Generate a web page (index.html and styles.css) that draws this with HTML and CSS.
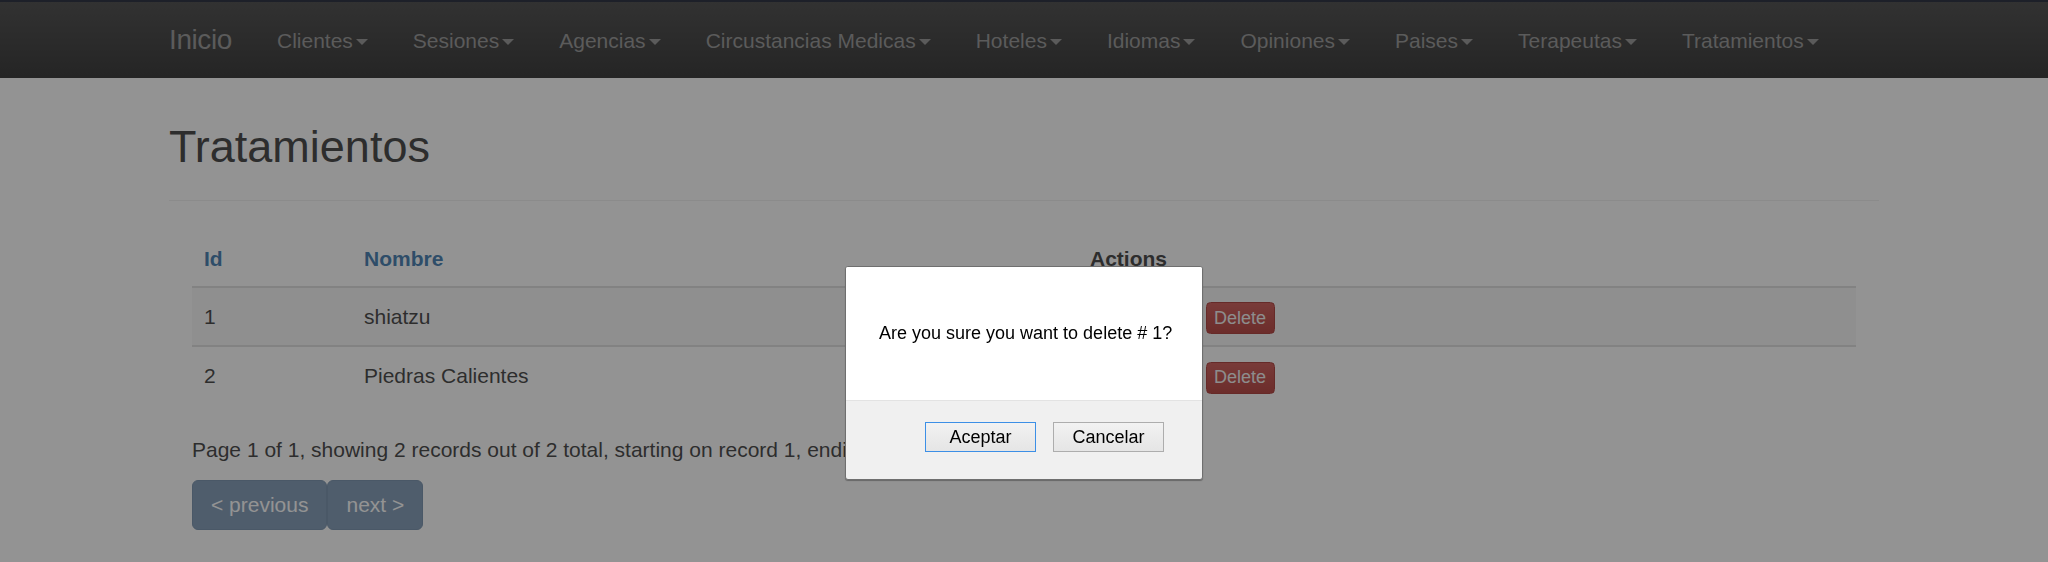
FILE: index.html
```html
<!DOCTYPE html>
<html lang="es">
<head>
<meta charset="utf-8">
<title>Tratamientos</title>
<link rel="stylesheet" href="styles.css">
</head>
<body>
<div class="navbar">
  <div class="nav-wrap">
    <a class="brand" href="#">Inicio</a>
    <ul class="nav">
      <li><a href="#">Clientes<span class="caret"></span></a></li>
      <li><a href="#">Sesiones<span class="caret"></span></a></li>
      <li><a href="#">Agencias<span class="caret"></span></a></li>
      <li><a href="#">Circustancias Medicas<span class="caret"></span></a></li>
      <li><a href="#">Hoteles<span class="caret"></span></a></li>
      <li><a href="#">Idiomas<span class="caret"></span></a></li>
      <li><a href="#">Opiniones<span class="caret"></span></a></li>
      <li><a href="#">Paises<span class="caret"></span></a></li>
      <li><a href="#">Terapeutas<span class="caret"></span></a></li>
      <li><a href="#">Tratamientos<span class="caret"></span></a></li>
    </ul>
  </div>
</div>

<div class="container">
  <div class="page-header">
    <h2>Tratamientos</h2>
  </div>
  <div class="content">
    <table class="table">
      <thead>
        <tr>
          <th class="col-id"><a href="#">Id</a></th>
          <th class="col-name"><a href="#">Nombre</a></th>
          <th class="col-actions">Actions</th>
        </tr>
      </thead>
      <tbody>
        <tr class="striped">
          <td>1</td>
          <td>shiatzu</td>
          <td class="actions"><a class="btn-xs btn-danger" href="#">Delete</a></td>
        </tr>
        <tr>
          <td>2</td>
          <td>Piedras Calientes</td>
          <td class="actions"><a class="btn-xs btn-danger" href="#">Delete</a></td>
        </tr>
      </tbody>
    </table>
    <p class="counter">Page 1 of 1, showing 2 records out of 2 total, starting on record 1, endi</p>
    <div class="pager">
      <span class="btn disabled">&lt; previous</span>
      <span class="btn disabled">next &gt;</span>
    </div>
  </div>
</div>

<div class="backdrop"></div>

<div class="dialog" role="dialog">
  <div class="dialog-body">Are you sure you want to delete # 1?</div>
  <div class="dialog-foot">
    <button class="dlg-btn focus" type="button">Aceptar</button>
    <button class="dlg-btn" type="button">Cancelar</button>
  </div>
</div>
</body>
</html>
```
FILE: styles.css
```css
* {
  box-sizing: border-box;
}

html,
body {
  margin: 0;
  padding: 0;
}

body {
  font-family: "Liberation Sans", Arial, sans-serif;
  font-size: 21px;
  line-height: 30px;
  color: #333;
  background: #fff;
  min-height: 562px;
}

/* Navbar */
.navbar {
  height: 78px;
  border-top: 2px solid #12182a;
  background: linear-gradient(#3c3c3c, #222);
}

.nav-wrap {
  width: 1710px;
  margin: 0 auto;
  display: flex;
}

.brand {
  display: block;
  font-size: 28px;
  letter-spacing: -0.4px;
  line-height: 30px;
  padding: 23px 22.5px 22px 0;
  color: #8e8e8e;
  text-decoration: none;
}

.nav {
  display: flex;
  list-style: none;
  margin: 0;
  padding: 0;
}

.nav a {
  display: block;
  padding: 24px 22.5px 22px;
  line-height: 30px;
  color: #8e8e8e;
  text-decoration: none;
  white-space: nowrap;
}

.caret {
  display: inline-block;
  width: 0;
  height: 0;
  margin-left: 3px;
  vertical-align: middle;
  border-top: 6px solid;
  border-left: 6px solid transparent;
  border-right: 6px solid transparent;
}

/* Page */
.container {
  width: 1710px;
  margin: 0 auto;
}

.page-header {
  margin: 44px 0 31px;
  padding-bottom: 13px;
  border-bottom: 1px solid #eee;
}

.page-header h2 {
  margin: 0 0 15px;
  font-size: 45px;
  line-height: 49.5px;
  font-weight: 500;
  color: #333;
}

.content {
  padding: 0 23px;
}

.table {
  width: 100%;
  border-collapse: separate;
  border-spacing: 0;
  margin-bottom: 30px;
  table-layout: fixed;
}

.table th {
  text-align: left;
  vertical-align: bottom;
  padding: 12px;
  line-height: 30px;
  border-bottom: 2px solid #ddd;
  font-weight: bold;
  color: #333;
}

.table th a {
  color: #3573aa;
  text-decoration: none;
}

.col-id {
  width: 160px;
}

.col-name {
  width: 726px;
}

.table td {
  padding: 11px 12px;
  line-height: 35px;
  border-top: 2px solid #ddd;
  vertical-align: top;
}

.table td.actions {
  padding-left: 127.5px;
}

.table tbody tr:first-child td {
  border-top: 0;
}

.table tr.striped td {
  background: #f7f7f7;
}

.btn-xs {
  display: inline-block;
  font-size: 18px;
  line-height: 27px;
  padding: 1.5px 7.5px;
  border: 1px solid transparent;
  border-radius: 4.5px;
  text-decoration: none;
  color: #f2f2f2;
}

.btn-danger {
  background: linear-gradient(#c94d49, #b0322e);
  border-color: #a52c28;
}

.counter {
  margin: 0 0 15px;
  white-space: nowrap;
}

.pager {
  display: flex;
}

.btn {
  display: block;
  padding: 9px 18px;
  line-height: 30px;
  font-size: 21px;
  color: #fff;
  background: #337ab7;
  border: 1px solid #2e6da4;
  border-radius: 6px;
  white-space: nowrap;
}

.btn.disabled {
  background: #7692b0;
  border-color: #6c88a6;
}

/* Tab-modal dim + confirm dialog */
.backdrop {
  position: fixed;
  left: 0;
  top: 0;
  right: 0;
  bottom: 0;
  background: rgba(40, 40, 40, 0.5);
}

.dialog {
  position: fixed;
  left: 845px;
  top: 266px;
  width: 358px;
  height: 214px;
  display: flex;
  flex-direction: column;
  background: #f0f0f0;
  border: 1px solid #6f6f6f;
  border-radius: 3px;
  box-shadow: 0 1px 1px rgba(0, 0, 0, 0.3);
  overflow: hidden;
  font-family: "Liberation Sans", Arial, sans-serif;
  font-size: 18px;
  color: #000;
}

.dialog-body {
  height: 133px;
  flex: none;
  padding: 56px 33px 0;
  line-height: 21px;
  background: #fff;
  white-space: nowrap;
}

.dialog-foot {
  flex: 1;
  display: flex;
  justify-content: flex-end;
  align-items: flex-start;
  gap: 17px;
  padding: 21px 38px 0 0;
  border-top: 1px solid #e3e3e3;
}

.dlg-btn {
  width: 111px;
  height: 30px;
  padding: 0;
  font-family: "Liberation Sans", Arial, sans-serif;
  font-size: 18px;
  line-height: 20px;
  color: #000;
  background: linear-gradient(#f2f2f2, #e5e5e5);
  border: 1px solid #adadad;
  border-radius: 0;
}

.dlg-btn.focus {
  border-color: #3c8fe6;
}
```
